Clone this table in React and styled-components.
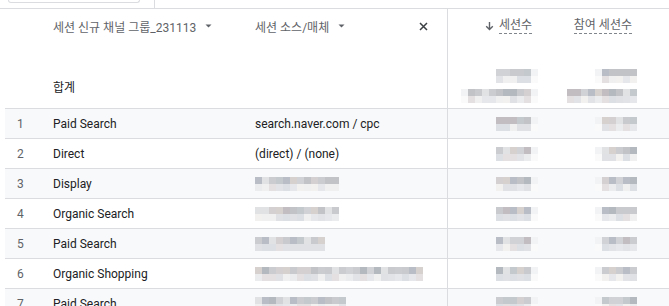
import React from "react";
import styled, { createGlobalStyle } from "styled-components";

const Global = createGlobalStyle`
  html, body { margin: 0; padding: 0; background: #fff; }
  body { width: 669px; height: 306px; overflow: hidden; font-family: Roboto, "Noto Sans CJK KR", sans-serif; }
`;

const LINE = "#dadce0";
const COLS = "40px 202px 200px 100px 100px 1fr";

const Page = styled.div`
  width: 669px;
`;

const TopStrip = styled.div`
  height: 9px;
  box-sizing: border-box;
  border-bottom: 1px solid ${LINE};
  display: flex;
  align-items: flex-start;
  padding-left: 8px;
`;

const SearchStub = styled.div`
  width: 132px;
  height: 3px;
  box-sizing: border-box;
  border: 1px solid ${LINE};
  border-top: 0;
  border-radius: 0 0 4px 4px;
`;

const StubDivider = styled.div`
  width: 1px;
  height: 8px;
  background: ${LINE};
  margin-left: 14px;
`;

const Table = styled.div`
  padding-left: 5px;
`;

const HeadRow = styled.div`
  display: grid;
  grid-template-columns: ${COLS};
  height: 34px;
  align-items: stretch;
  font-size: 12px;
  color: #5f6368;
`;

const TotalsRow = styled.div`
  display: grid;
  grid-template-columns: ${COLS};
  height: 66px;
  box-sizing: border-box;
  border-bottom: 1px solid ${LINE};
  align-items: stretch;
`;

const Row = styled.div`
  display: grid;
  grid-template-columns: ${COLS};
  height: 30px;
  box-sizing: border-box;
  border-bottom: 1px solid ${LINE};
  background: ${(p) => (p.$shaded ? "#f8f9fa" : "#fff")};
  font-size: 12px;
  color: #202124;
`;

const Cell = styled.div`
  display: flex;
  align-items: ${(p) => p.$align || "center"};
  justify-content: ${(p) => p.$justify || "flex-start"};
  padding-left: ${(p) => p.$pl ?? 0}px;
  padding-right: ${(p) => p.$pr ?? 0}px;
  padding-bottom: ${(p) => p.$pb ?? 0}px;
  border-left: ${(p) => (p.$divider ? `1px solid ${LINE}` : "none")};
  box-sizing: border-box;
  min-width: 0;
  white-space: nowrap;
`;

const IndexText = styled.span`
  color: #5f6368;
`;

const DimHead = styled.div`
  display: flex;
  align-items: center;
  gap: 9px;
`;

const MetricHead = styled.div`
  display: flex;
  align-items: center;
  gap: 5px;
  color: #5f6368;
`;

const Dashed = styled.span`
  border-bottom: 1px dashed #80868b;
  padding-bottom: 1px;
  line-height: 14px;
`;

const TotalsStack = styled.div`
  display: flex;
  flex-direction: column;
  align-items: flex-end;
  gap: 6px;
`;

const TotalLabel = styled.div`
  height: 34px;
  display: flex;
  align-items: center;
  font-size: 12px;
  color: #202124;
`;

const MosaicGrid = styled.div`
  display: grid;
  grid-template-columns: repeat(${(p) => p.$cols}, 7px);
  grid-auto-rows: 7px;
`;

const Px = styled.div``;

function mulberry(seed) {
  let a = seed >>> 0;
  return () => {
    a += 0x6d2b79f5;
    let t = a;
    t = Math.imul(t ^ (t >>> 15), t | 1);
    t ^= t + Math.imul(t ^ (t >>> 7), t | 61);
    return ((t ^ (t >>> 14)) >>> 0) / 4294967296;
  };
}

const DARK = ["#c2c3c7", "#cbccd0", "#d6d1ce", "#b9bec6", "#c1bdc0", "#d0d2d6", "#c8cacd", "#b4b8bf", "#d4cfd1", "#c4c9cd", "#e1e2e4"];
const LIGHT = ["#e2e3e6", "#ebeced", "#e4e0e2", "#dcdfe4", "#f0f0f1", "#e6e7ea", "#f3f1f0", "#dfe1e4"];

function Mosaic({ seed, cols, rows = 2, fadeLast = false, fadeFirst = false }) {
  const r = mulberry(seed);
  const cells = [];
  for (let y = 0; y < rows; y++) {
    for (let x = 0; x < cols; x++) {
      let c = y === 0 ? DARK[Math.floor(r() * DARK.length)] : LIGHT[Math.floor(r() * LIGHT.length)];
      if ((fadeLast && x === cols - 1) || (fadeFirst && x === 0)) c = y === 0 ? "#f2f3f5" : "#fafafa";
      cells.push(<Px key={`${x}-${y}`} style={{ background: c }} />);
    }
  }
  return <MosaicGrid $cols={cols}>{cells}</MosaicGrid>;
}

const Caret = () => (
  <svg width="7" height="4" viewBox="0 0 7 4">
    <path d="M0.5 0.5 L6.5 0.5 L3.5 3.5 Z" fill="#5f6368" />
  </svg>
);

const CloseIcon = () => (
  <svg width="9" height="9" viewBox="0 0 9 9">
    <path d="M1 1 L8 8 M8 1 L1 8" stroke="#3c4043" strokeWidth="1.5" />
  </svg>
);

const DownArrow = () => (
  <svg width="9" height="10" viewBox="0 0 9 10">
    <path d="M4.5 1 V8.5 M1.2 5.3 L4.5 8.6 L7.8 5.3" stroke="#5f6368" strokeWidth="1.4" fill="none" />
  </svg>
);

const rows = [
  { n: 1, ch: "Paid Search", src: "search.naver.com / cpc" },
  { n: 2, ch: "Direct", src: "(direct) / (none)" },
  { n: 3, ch: "Display", srcCells: 12 },
  { n: 4, ch: "Organic Search", srcCells: 12 },
  { n: 5, ch: "Paid Search", srcCells: 10 },
  { n: 6, ch: "Organic Shopping", srcCells: 24 },
  { n: 7, ch: "Paid Search", srcCells: 13 },
];

export default function App() {
  return (
    <Page>
      <Global />
      <TopStrip>
        <SearchStub />
        <StubDivider />
      </TopStrip>
      <Table>
        <HeadRow>
          <Cell />
          <Cell $pl={8}>
            <DimHead>
              세션 신규 채널 그룹_231113
              <Caret />
            </DimHead>
          </Cell>
          <Cell $pl={8} $pr={19} $justify="space-between">
            <DimHead>
              세션 소스/매체
              <Caret />
            </DimHead>
            <CloseIcon />
          </Cell>
          <Cell $divider $justify="flex-end" $pr={15}>
            <MetricHead>
              <DownArrow />
              <Dashed>세션수</Dashed>
            </MetricHead>
          </Cell>
          <Cell $justify="flex-end" $pr={15}>
            <MetricHead>
              <Dashed>참여 세션수</Dashed>
            </MetricHead>
          </Cell>
          <Cell />
        </HeadRow>
        <TotalsRow>
          <Cell />
          <Cell $pl={8} $align="flex-end" $pb={5}>
            <TotalLabel>합계</TotalLabel>
          </Cell>
          <Cell />
          <Cell $divider $justify="flex-end" $pr={9} $align="flex-end" $pb={5}>
            <TotalsStack>
              <Mosaic seed={11} cols={6} fadeLast />
              <Mosaic seed={12} cols={11} fadeFirst fadeLast />
            </TotalsStack>
          </Cell>
          <Cell $justify="flex-end" $pr={10} $align="flex-end" $pb={5}>
            <TotalsStack>
              <Mosaic seed={13} cols={6} fadeFirst />
              <Mosaic seed={14} cols={10} />
            </TotalsStack>
          </Cell>
          <Cell />
        </TotalsRow>
        {rows.map((r) => (
          <Row key={r.n} $shaded={r.n % 2 === 1}>
            <Cell $pl={12}>
              <IndexText>{r.n}</IndexText>
            </Cell>
            <Cell $pl={8}>{r.ch}</Cell>
            <Cell $pl={8}>{r.src ? r.src : <Mosaic seed={100 + r.n} cols={r.srcCells} />}</Cell>
            <Cell $divider $justify="flex-end" $pr={9}>
              <Mosaic seed={200 + r.n} cols={6} fadeLast />
            </Cell>
            <Cell $justify="flex-end" $pr={10}>
              <Mosaic seed={300 + r.n} cols={6} fadeFirst />
            </Cell>
            <Cell />
          </Row>
        ))}
      </Table>
    </Page>
  );
}
